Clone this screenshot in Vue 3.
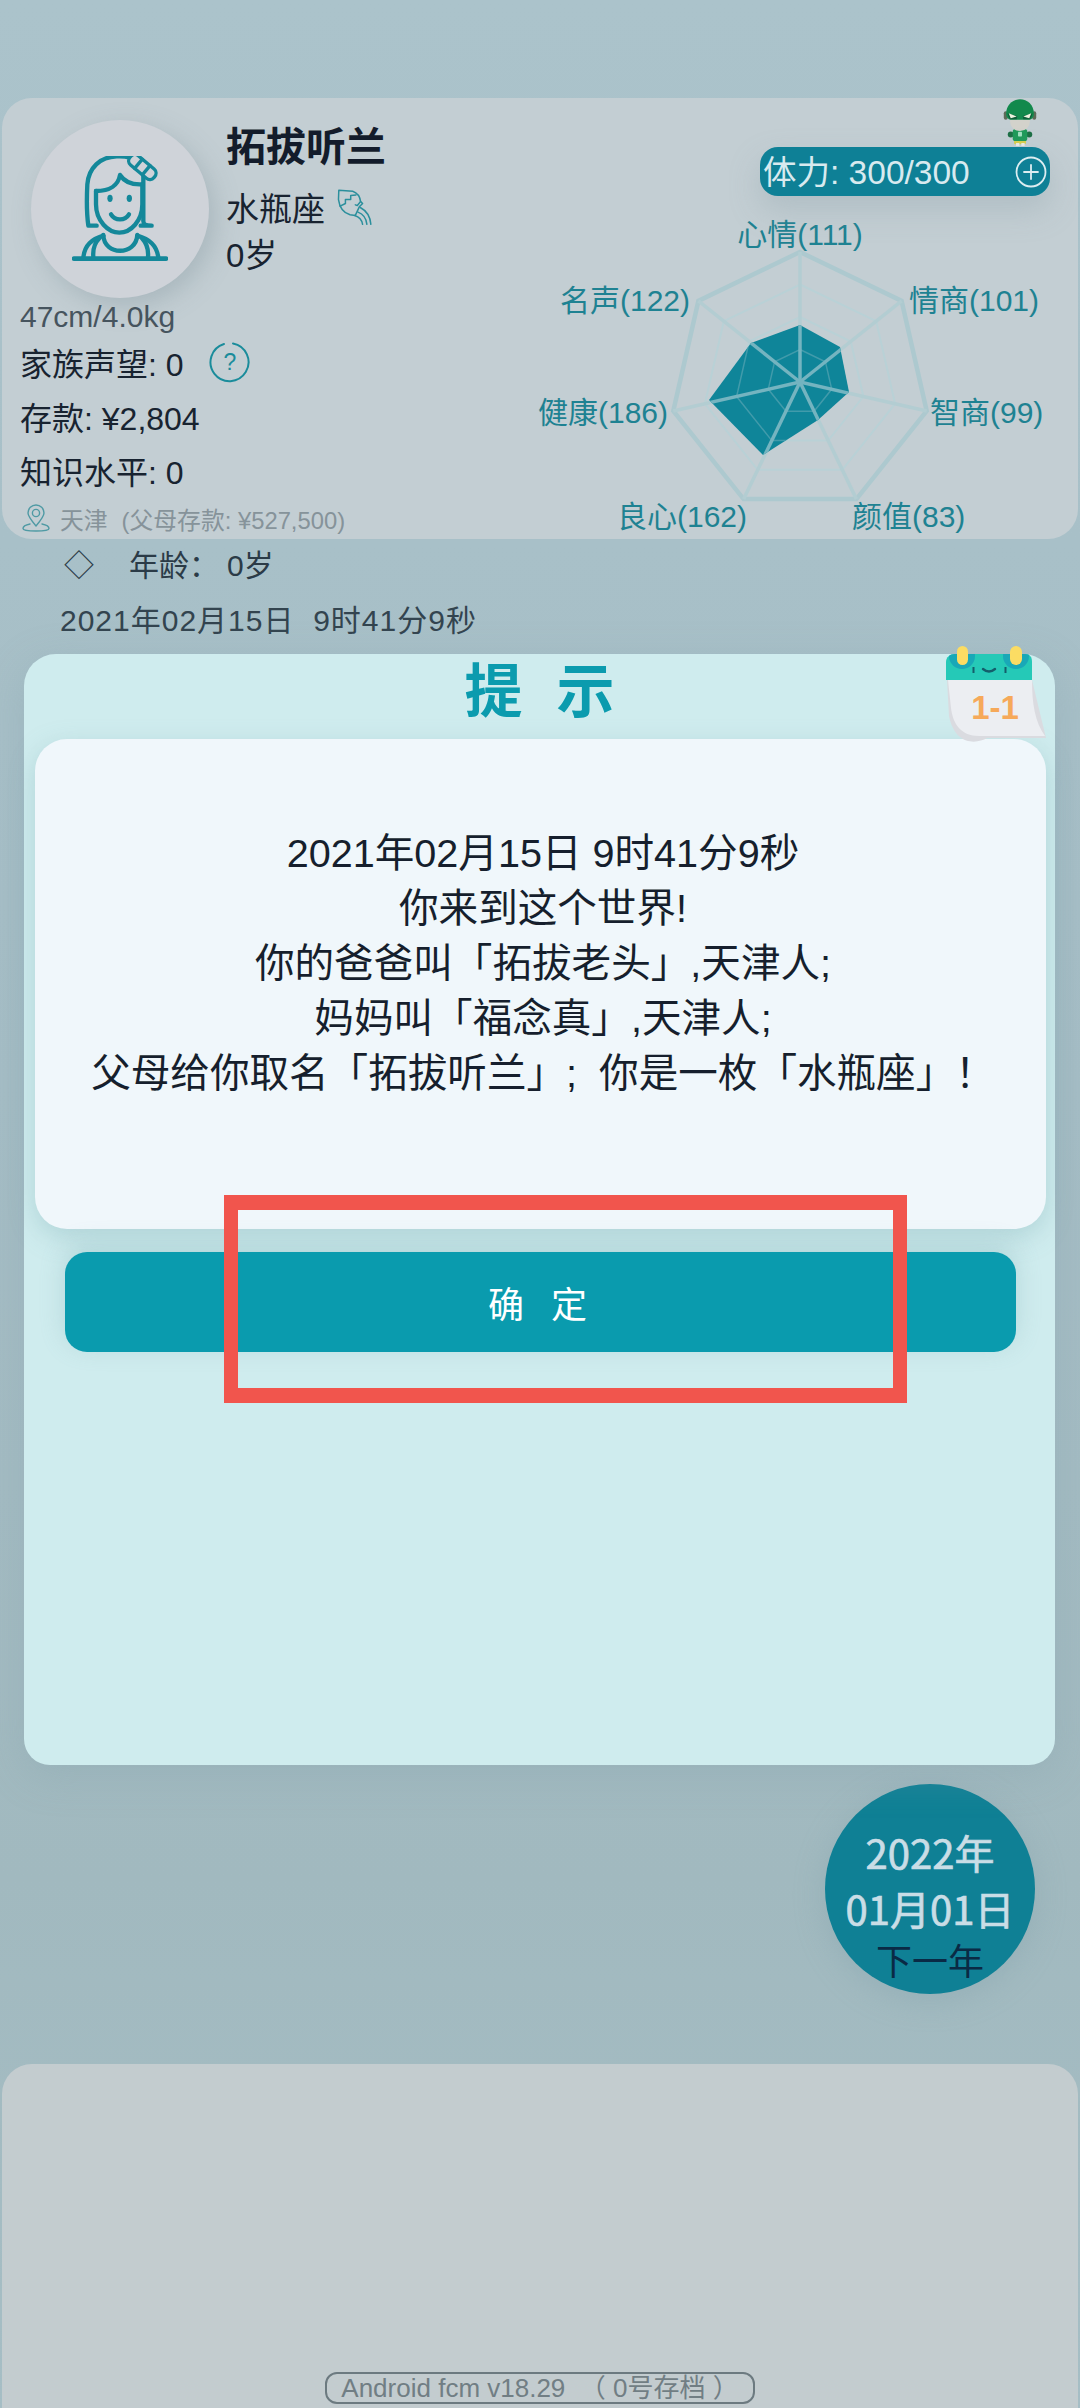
<script setup>
const R = 130, cx = 800, cy = 382
const angle = i => -Math.PI / 2 + (i * 2 * Math.PI) / 7
const ring = f => Array.from({ length: 7 }, (_, i) => {
  const a = angle(i)
  return `${(cx + R * f * Math.cos(a)).toFixed(1)},${(cy + R * f * Math.sin(a)).toFixed(1)}`
}).join(' ')
const rings = [0.25, 0.5, 0.75, 1]
const spokes = Array.from({ length: 7 }, (_, i) => {
  const a = angle(i)
  return { x: cx + R * Math.cos(a), y: cy + R * Math.sin(a) }
})
const data = '800,325 840,347 849,392 818,420 763,455 709,400 751,343'
const labels = [
  { t: '心情(111)', x: 800, y: 245, a: 'middle' },
  { t: '情商(101)', x: 909, y: 311, a: 'start' },
  { t: '智商(99)', x: 930, y: 423, a: 'start' },
  { t: '颜值(83)', x: 852, y: 527, a: 'start' },
  { t: '良心(162)', x: 747, y: 527, a: 'end' },
  { t: '健康(186)', x: 668, y: 423, a: 'end' },
  { t: '名声(122)', x: 690, y: 311, a: 'end' }
]
const stats = ['存款: ¥2,804', '知识水平: 0']
const story = [
  '2021年02月15日 9时41分9秒',
  '你来到这个世界!',
  '你的爸爸叫「拓拔老头」,天津人;',
  '妈妈叫「福念真」,天津人;',
  '父母给你取名「拓拔听兰」;\u00a0\u00a0你是一枚「水瓶座」！'
]
</script>

<template>
  <div class="page">
    <section class="profile">
      <div class="left">
        <div class="head">
          <div class="avatar">
            <svg width="96" height="106" viewBox="36 45 288 318" fill="none" stroke="#14889a" stroke-width="13" stroke-linecap="round" stroke-linejoin="round">
              <path d="M110 254 H85 C80 220 80 170 82 130 C86 80 120 48 170 46 C185 45 197 46 210 50" />
              <path d="M250 100 V240 C250 250 255 254 275 254 H242" />
              <path d="M108 150 C150 150 175 132 180 102 C195 125 220 132 248 130" />
              <path d="M108 150 V190 C108 240 145 275 178 275 C212 275 247 240 247 190 V130" />
              <ellipse cx="150" cy="172" rx="8" ry="11" fill="#14889a" stroke="none" />
              <ellipse cx="208" cy="172" rx="8" ry="11" fill="#14889a" stroke="none" />
              <path d="M153 220 C165 240 195 240 207 220" />
              <g transform="rotate(40 247 78)" stroke-width="10" fill="#cfd3d9">
                <rect x="200" y="60" width="94" height="36" rx="16" />
                <path d="M232 60 V96 M262 60 V96" />
              </g>
              <path d="M130 282 C132 345 228 345 232 282" />
              <path d="M70 350 C74 312 95 295 130 284 M295 350 C290 312 268 295 232 284" />
              <path d="M100 348 C98 325 105 305 118 292 M264 348 C266 325 258 305 246 292" />
              <path d="M42 353 H318" stroke-width="14" />
            </svg>
          </div>
          <div class="identity">
            <div class="name">拓拔听兰</div>
            <div class="sign">
              <span>水瓶座</span>
              <svg width="38" height="38" viewBox="30 15 110 115" fill="none" stroke="#2b8f9c" stroke-width="4.5" stroke-linecap="round" stroke-linejoin="round">
                <path d="M36 22 L78 25 C92 30 100 42 102 56 L108 62 L98 72 L86 98 L70 96 C50 90 38 72 35 50 Z" />
                <path d="M40 70 L56 62 L56 50 L72 50 L72 38 L88 36" />
                <path d="M102 56 L92 68 L86 66" />
                <path d="M84 98 C98 102 106 112 108 125 M94 88 C110 94 119 106 121 125 M101 74 C120 84 131 100 133 125" />
              </svg>
            </div>
            <div class="age">0岁</div>
          </div>
        </div>
        <div class="body-size">47cm/4.0kg</div>
        <div class="stat">
          <span>家族声望: 0</span>
          <svg class="help" width="42" height="42" viewBox="0 0 42 42" fill="none">
            <path d="M24 2.5 A19 19 0 1 1 15 3" stroke="#1a8c9b" stroke-width="2" stroke-linecap="round" />
            <text x="21" y="29" text-anchor="middle" class="help-text">?</text>
          </svg>
        </div>
        <div v-for="s in stats" :key="s" class="stat">{{ s }}</div>
        <div class="place">
          <svg width="28" height="28" viewBox="0 0 28 28" fill="none" stroke="#4f9aa4" stroke-width="1.4" stroke-linecap="round" stroke-linejoin="round">
            <path d="M14 22 C9 16 6 12 6 9 A8 8 0 0 1 22 9 C22 12 19 16 14 22 Z" />
            <circle cx="14" cy="9" r="3.6" />
            <path d="M8 20 C3 21 1 23 1 24.5 C1 26.5 7 27 14 27 C21 27 27 26.5 27 24.5 C27 23 25 21 20 20" />
          </svg>
          <span class="place-city">天津</span>
          <span>(父母存款: ¥527,500)</span>
        </div>
      </div>

      <div class="right">
        <svg class="hero" width="36" height="48" viewBox="36 10 108 145">
          <circle cx="62" cy="120" r="9" fill="#1d6f45" />
          <circle cx="118" cy="120" r="9" fill="#1d6f45" />
          <rect x="72" y="136" width="36" height="14" rx="4" fill="#d8cf4e" />
          <rect x="78" y="146" width="10" height="9" fill="#ecece6" />
          <rect x="94" y="146" width="10" height="9" fill="#ecece6" />
          <rect x="68" y="104" width="44" height="36" rx="8" fill="#1f9a5a" />
          <rect x="84" y="112" width="12" height="14" rx="2" fill="#9fe0c0" />
          <rect x="41" y="50" width="12" height="26" rx="6" fill="#5d6a58" />
          <rect x="127" y="50" width="12" height="26" rx="6" fill="#5d6a58" />
          <circle cx="90" cy="80" r="30" fill="#d3d2cb" />
          <path d="M48 58 C48 30 68 14 90 14 C112 14 132 30 132 58 C132 68 126 74 118 76 H62 C54 74 48 68 48 58 Z" fill="#12894c" />
          <path d="M52 56 L82 64 L80 74 L60 74 C56 70 54 64 52 56 Z M128 56 L98 64 L100 74 L120 74 C124 70 126 64 128 56 Z" fill="#0d5f39" />
          <path d="M56 56 L80 66 L62 71 Z M124 56 L100 66 L118 71 Z" fill="#eef3df" />
        </svg>
        <div class="stamina">
          <span class="stamina-text">体力: 300/300</span>
          <svg width="32" height="32" viewBox="0 0 32 32" fill="none" stroke="#dcedf1" stroke-width="1.8" stroke-linecap="round">
            <circle cx="16" cy="16" r="14.5" />
            <path d="M16 9 V23 M9 16 H23" />
          </svg>
        </div>
        <svg class="radar" width="548" height="330" viewBox="530 205 548 330">
          <defs>
            <clipPath id="radar-data">
              <polygon :points="data" />
            </clipPath>
          </defs>
          <g fill="none">
            <polygon v-for="f in rings" :key="f" :points="ring(f)" :stroke="f === 1 ? '#adc9cf' : '#b9d1d6'" :stroke-width="f === 1 ? 4.5 : 2" />
          </g>
          <line v-for="(p, i) in spokes" :key="i" :x1="cx" :y1="cy" :x2="p.x" :y2="p.y" stroke="#b3cdd2" stroke-width="3.5" />
          <polygon :points="data" fill="#0f8599" />
          <g clip-path="url(#radar-data)">
            <g fill="none" stroke="#4ea0af" stroke-width="1.5" opacity="0.8">
              <polygon :points="ring(0.25)" />
              <polygon :points="ring(0.5)" />
            </g>
            <line v-for="(p, i) in spokes" :key="i" :x1="cx" :y1="cy" :x2="p.x" :y2="p.y" stroke="#74b4c0" stroke-width="3.5" />
          </g>
          <text v-for="l in labels" :key="l.t" :x="l.x" :y="l.y" :text-anchor="l.a" class="radar-label">{{ l.t }}</text>
        </svg>
      </div>
    </section>

    <div class="line-age"><span class="diamond">◇</span><span class="age-key">年龄：</span><span>0岁</span></div>
    <div class="line-date">2021年02月15日&nbsp;&nbsp;9时41分9秒</div>

    <section class="dialog">
      <h2 class="title">提示</h2>
      <svg class="calendar" width="100" height="100" viewBox="0 0 100 100">
        <defs>
          <clipPath id="calendar-band">
            <path d="M-1 34 V16 C-1 11 3 8 8 8 H78 C83 8 85 11 85 16 V34 Z" />
          </clipPath>
        </defs>
        <path d="M0 34 H85 L99 92 H40 C30 98 8 100 2 70 Z" fill="#dadbe0" />
        <path d="M1 34 H85 C85 58 88 76 98 90 H32 C14 90 6 78 4 62 Z" fill="#eceef2" />
        <path d="M-1 34 V16 C-1 11 3 8 8 8 H78 C83 8 85 11 85 16 V34 Z" fill="#25c9b7" />
        <g clip-path="url(#calendar-band)">
          <circle cx="15" cy="10" r="13" fill="#19a8b7" />
          <circle cx="69" cy="10" r="13" fill="#19a8b7" />
        </g>
        <rect x="10" y="0" width="11" height="19" rx="5.5" fill="#fbdc63" />
        <rect x="63" y="0" width="12" height="19" rx="6" fill="#fbdc63" />
        <path d="M36 23 Q42 28 48 23" stroke="#145e6b" stroke-width="2.4" fill="none" stroke-linecap="round" />
        <rect x="25.5" y="21" width="2" height="6" fill="#145e6b" />
        <rect x="57.5" y="21" width="2" height="6" fill="#145e6b" />
        <text x="48" y="73" text-anchor="middle" class="calendar-text">1-1</text>
      </svg>
      <div class="story">
        <p v-for="l in story" :key="l">{{ l }}</p>
      </div>
      <button class="confirm" type="button">确定</button>
      <div class="highlight"></div>
    </section>

    <button class="next" type="button">
      <span class="next-date">2022年</span>
      <span class="next-date">01月01日</span>
      <span class="next-label">下一年</span>
    </button>

    <footer class="bottom">
      <div class="version">Android fcm v18.29 &nbsp;（ 0号存档 ）</div>
    </footer>
  </div>
</template>

<style>
html, body {
  margin: 0;
  background: #a9c1c8;
}
</style>

<style scoped>
.page {
  position: relative;
  width: 1080px;
  height: 2408px;
  overflow: hidden;
  display: flex;
  flex-direction: column;
  padding-top: 98px;
  box-sizing: border-box;
  background: linear-gradient(180deg, #abc3cb 0%, #a5bdc5 45%, #a1b9bf 78%, #a6bec5 100%);
  font-family: "Liberation Sans", "Noto Sans CJK SC", sans-serif;
  color: #182330;
}
.profile {
  display: flex;
  justify-content: space-between;
  height: 441px;
  flex: none;
  margin: 0 2px;
  border-radius: 30px;
  background: #c3ced3;
}
.left {
  width: 520px;
  padding-left: 18px;
  box-sizing: border-box;
}
.head {
  display: flex;
  height: 200px;
}
.avatar {
  width: 178px;
  height: 178px;
  margin: 22px 0 0 11px;
  flex: none;
  border-radius: 50%;
  background: #cfd3d9;
  box-shadow: 6px 8px 24px rgba(120, 140, 150, 0.35);
  display: flex;
  align-items: center;
  justify-content: center;
}
.identity {
  margin-left: 17px;
}
.name {
  font-size: 40px;
  font-weight: 700;
  line-height: 50px;
  margin-top: 24px;
  color: #131c2b;
}
.sign {
  display: flex;
  align-items: center;
  gap: 11px;
  margin-top: 12px;
  height: 45px;
  font-size: 33px;
}
.age {
  font-size: 33px;
  line-height: 46px;
  margin-top: 4px;
}
.body-size {
  font-size: 30px;
  line-height: 38px;
  margin-bottom: -1px;
  color: #46545e;
}
.stat {
  display: flex;
  align-items: center;
  gap: 25px;
  height: 54px;
  font-size: 32px;
}
.help-text {
  font-size: 23px;
  fill: #1a8c9b;
  font-family: "Liberation Sans", sans-serif;
}
.place {
  display: flex;
  align-items: center;
  height: 34px;
  margin: 4px 0 0 2px;
  font-size: 23.8px;
  color: #86939a;
}
.place-city {
  margin: 0 14px 0 10px;
}
.right {
  position: relative;
  flex: 1;
  display: flex;
  flex-direction: column;
  align-items: flex-end;
  padding-top: 49px;
  box-sizing: border-box;
}
.hero {
  position: absolute;
  top: 0;
  right: 40px;
}
.stamina {
  position: relative;
  display: flex;
  align-items: center;
  justify-content: space-between;
  width: 290px;
  height: 49px;
  margin-right: 28px;
  padding: 0 3px;
  box-sizing: border-box;
  border-radius: 18px;
  background: #0e8096;
  color: #d8eaef;
  font-size: 33.5px;
  white-space: nowrap;
  box-shadow: 0 14px 30px rgba(140, 160, 170, 0.35);
}
.stamina-text {
  margin-top: -4px;
}
.radar {
  display: block;
  margin-top: 9px;
  flex: none;
}
.radar-label {
  font-size: 30px;
  fill: #1e8292;
}
.line-age {
  display: flex;
  align-items: center;
  height: 48px;
  margin-left: 64px;
  font-size: 30px;
  color: #2b3b47;
  flex: none;
}
.diamond {
  width: 65px;
}
.age-key {
  width: 98px;
}
.line-date {
  height: 67px;
  line-height: 68px;
  margin-left: 60px;
  font-size: 30px;
  letter-spacing: 1px;
  color: #33444f;
  flex: none;
}
.dialog {
  position: relative;
  flex: none;
  height: 1111px;
  margin: 0 25px 0 24px;
  border-radius: 32px 32px 26px 26px;
  background: #cfecee;
  box-shadow: 0 10px 40px rgba(130, 160, 170, 0.3);
  display: flex;
  flex-direction: column;
  align-items: stretch;
}
.title {
  margin: 0;
  height: 85px;
  line-height: 75px;
  text-align: center;
  font-size: 58px;
  font-weight: 700;
  letter-spacing: 34px;
  padding-left: 34px;
  color: #0b9bae;
}
.calendar {
  position: absolute;
  top: -8px;
  right: 8px;
  overflow: visible;
}
.calendar-text {
  font-size: 33px;
  font-weight: 700;
  fill: #f6a95a;
  font-family: "Liberation Sans", sans-serif;
}
.story {
  height: 490px;
  margin: 0 9px 0 11px;
  flex: none;
  box-sizing: border-box;
  border-radius: 32px;
  background: #f0f7fb;
  box-shadow: 0 8px 26px rgba(120, 170, 175, 0.35);
  display: flex;
  flex-direction: column;
  justify-content: center;
  align-items: center;
  padding: 0 0 41px 5px;
  font-size: 39.6px;
  line-height: 55px;
  color: #161f2d;
}
.story p {
  margin: 0;
  white-space: nowrap;
}
.confirm {
  height: 100px;
  margin: 23px 39px 0 41px;
  flex: none;
  border: 0;
  border-radius: 22px;
  background: #0a9bae;
  color: #fff;
  font-family: inherit;
  font-size: 36px;
  letter-spacing: 27px;
  padding-left: 27px;
  box-shadow: 0 -6px 24px rgba(120, 170, 175, 0.3);
}
.highlight {
  position: absolute;
  top: 541px;
  left: 200px;
  width: 683px;
  height: 208px;
  box-sizing: border-box;
  border: 14px solid #f1554d;
  border-top-width: 15px;
  border-bottom-width: 15px;
}
.next {
  width: 210px;
  height: 210px;
  flex: none;
  align-self: flex-end;
  margin: 19px 45px 0 0;
  padding: 27px 0 0;
  border: 0;
  border-radius: 50%;
  background: #0f8095;
  display: flex;
  flex-direction: column;
  align-items: center;
  justify-content: center;
  font-family: "Noto Sans CJK SC", sans-serif;
  box-shadow: 0 6px 30px rgba(130, 160, 170, 0.4);
}
.next-date {
  font-size: 40px;
  line-height: 56px;
  color: #c9dde6;
  -webkit-text-stroke: 0.7px #c9dde6;
}
.next-label {
  font-size: 36px;
  font-weight: 400;
  line-height: 46px;
  color: #0a2a45;
}
.bottom {
  margin: auto 2px 0;
  height: 344px;
  flex: none;
  box-sizing: border-box;
  border-radius: 30px 30px 0 0;
  background: #c3cccf;
  display: flex;
  align-items: flex-end;
  justify-content: center;
  padding: 0 0 4px;
}
.version {
  width: 430px;
  height: 32px;
  line-height: 28px;
  box-sizing: border-box;
  border: 2px solid #6c7a80;
  border-radius: 12px;
  text-align: center;
  font-size: 26px;
  color: #717e84;
  white-space: nowrap;
}
</style>
